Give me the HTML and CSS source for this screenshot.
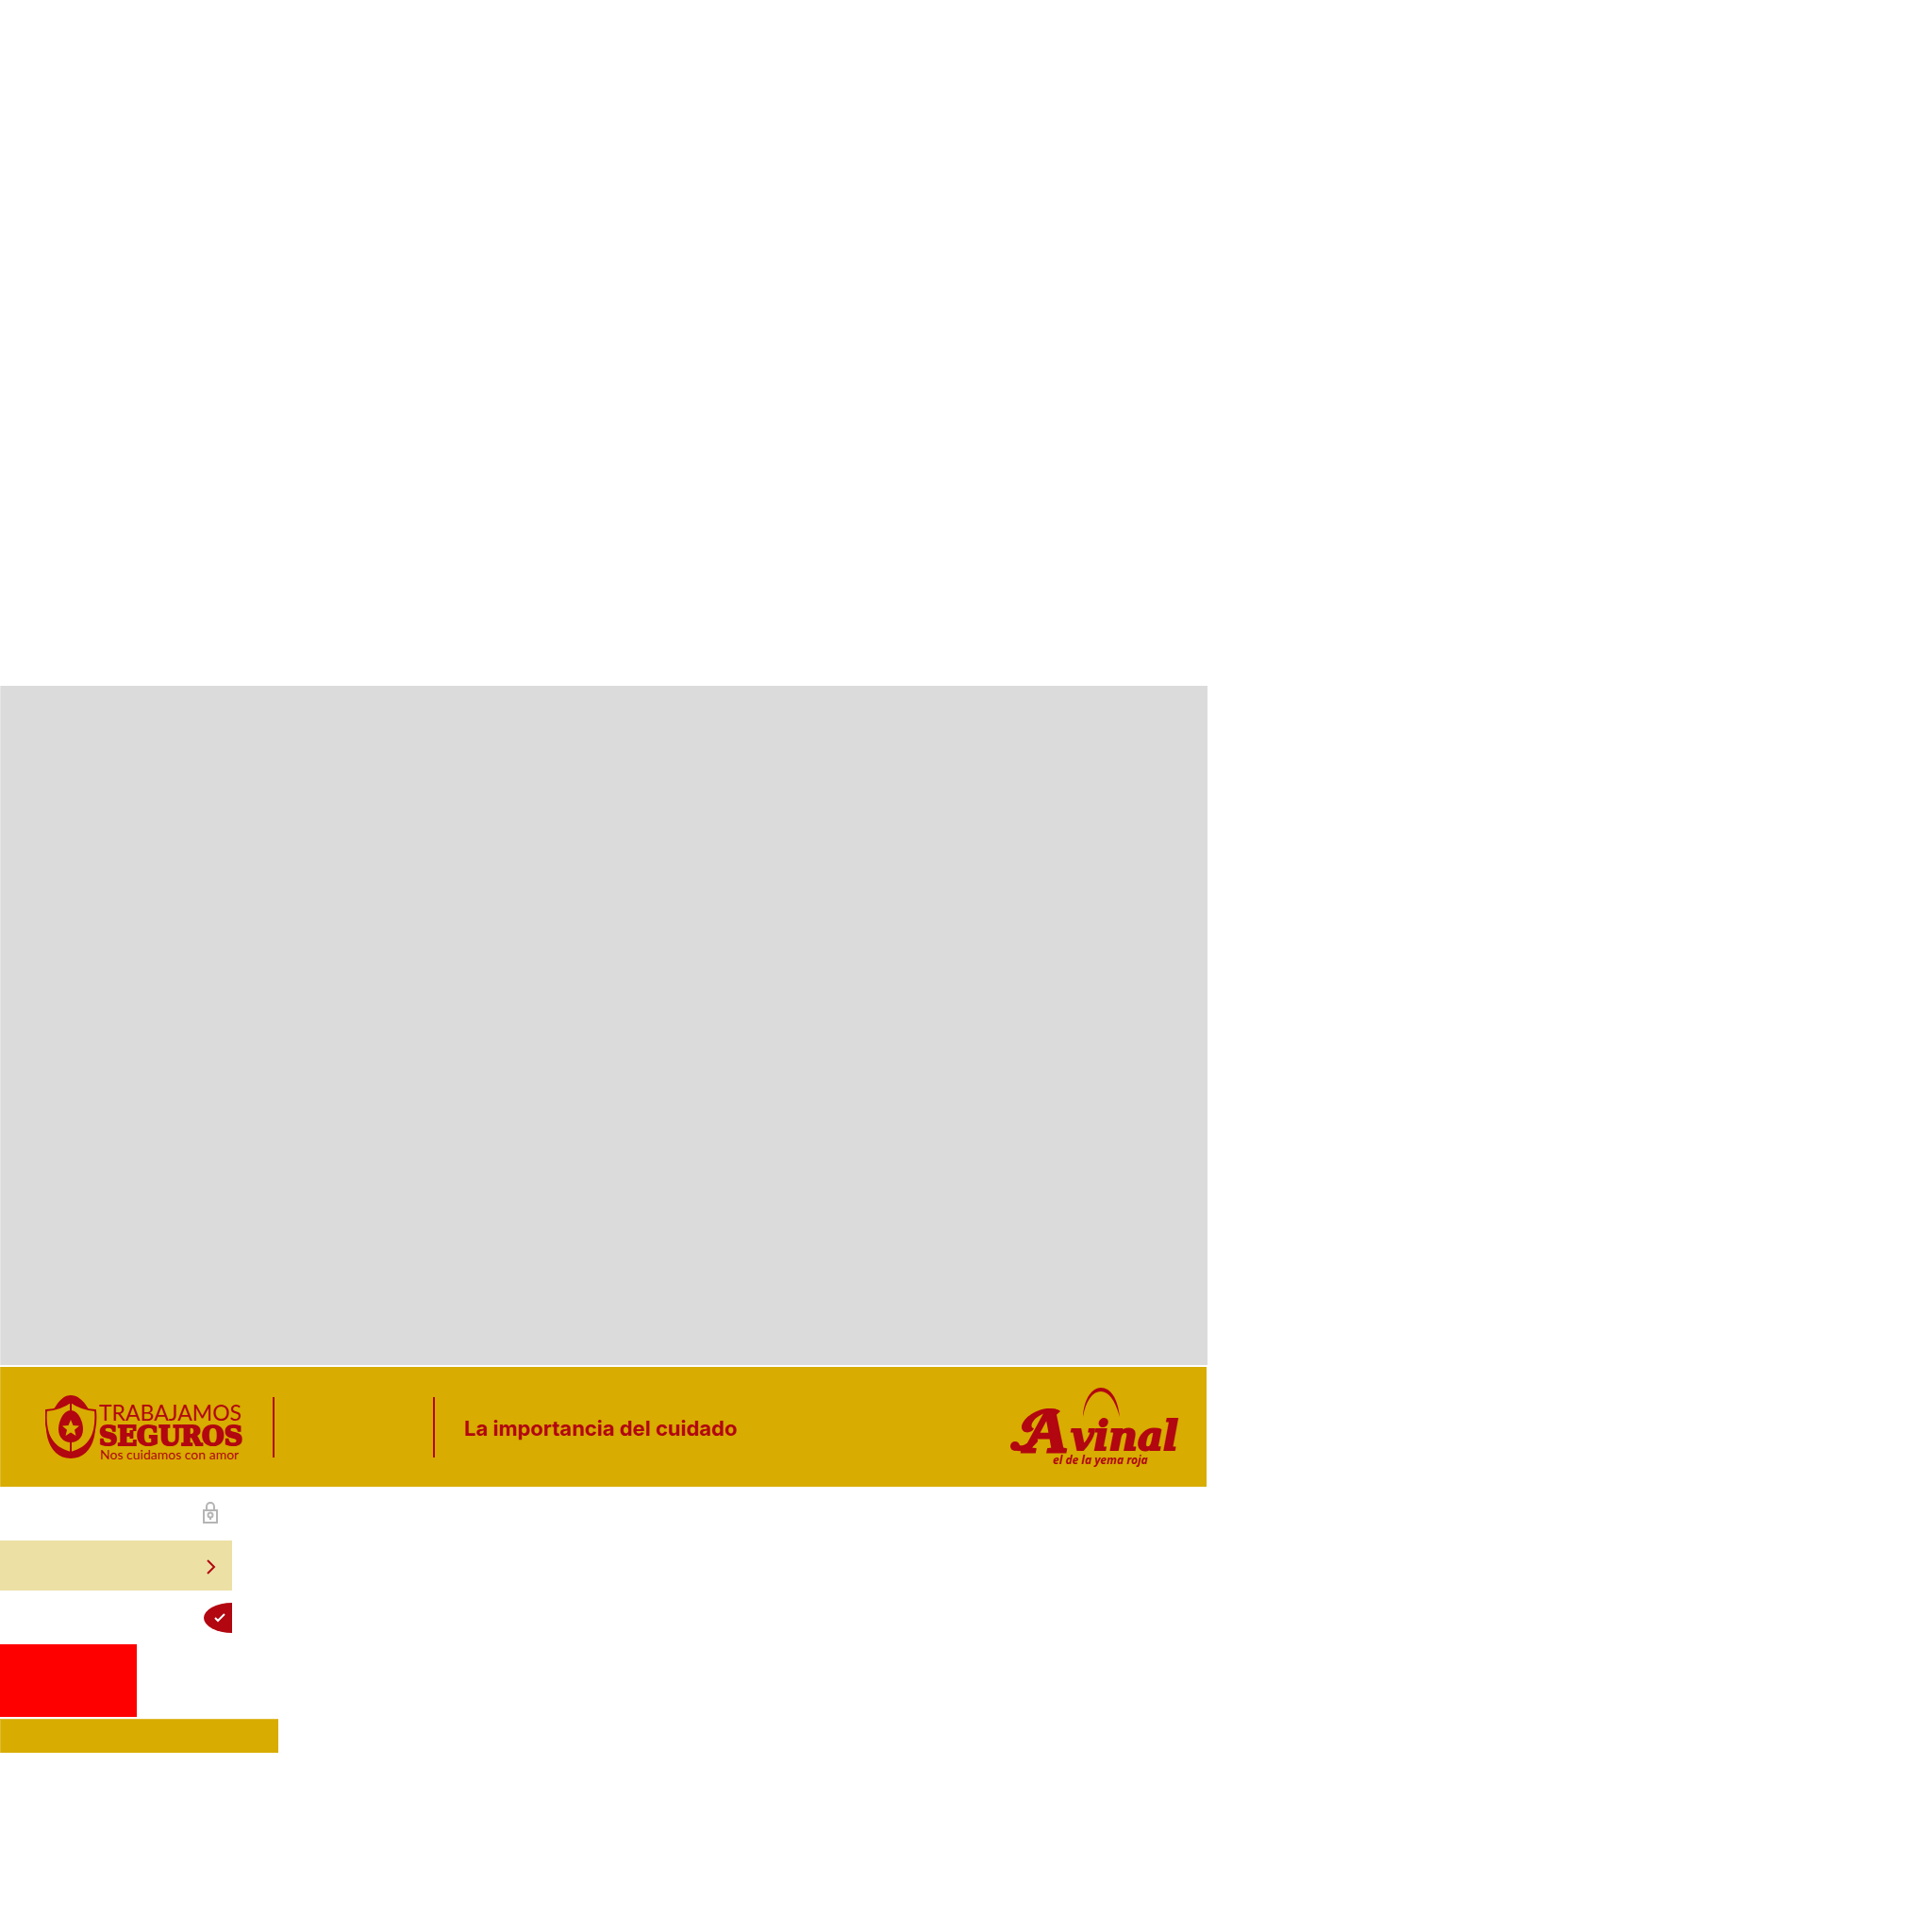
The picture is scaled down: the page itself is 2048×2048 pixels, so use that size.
FILE: index.html
```html
<!DOCTYPE html>
<html lang="es">
<head>
<meta charset="utf-8">
<meta name="viewport" content="width=device-width, initial-scale=1">
<title>La importancia del cuidado</title>
<link rel="stylesheet" href="styles.css">
</head>
<body>
<main class="course">
  <section class="stage" aria-label="Contenido"></section>

  <header class="banner">
    <svg class="brand" width="212" height="74" viewBox="0 0 212 74" role="img" aria-label="Trabajamos Seguros">
      <path class="ink" d="M9 18C15 7 21 3 27 3S40 7 46 18Q36 16 27 10Q19 16 9 18Z"/>
      <path class="line" d="M27 10Q16 18 1 19C-1 40 4 59 27 68C50 59 55 40 53 19Q38 18 27 10Z"/>
      <path class="ink" d="M1 36C1 56 11 70 27 70S53 56 53 36C48 52 41 59 27 63C13 59 6 52 1 36Z"/>
      <path class="stem" d="M27 10V67"/>
      <path class="ink" d="M27 19C35 19 40 31 40 39C40 48 34 53 27 53S14 48 14 39C14 31 19 19 27 19Z"/>
      <path class="star" d="M27 29L29.500 35L36 35.500L31 39.700L32.500 46L27 42.600L21.500 46L23 39.700L18 35.500L24.500 35Z"/>
      <text class="brand-top" x="57" y="30">TRABAJAMOS</text>
      <text class="brand-name" x="57" y="56">SEGUROS</text>
      <text class="brand-tag" x="58" y="71">Nos cuidamos con amor</text>
    </svg>
    <div class="slot"></div>
    <h1 class="title">La importancia del cuidado</h1>
    <svg class="avinal" width="184" height="86" viewBox="0 0 184 86" role="img" aria-label="Avinal, el de la yema roja">
      <path class="ink" d="M78 32C79 12 88 1 97 1C107 1 115 12 117 32C112 14 105 5 97 5C88 5 81 15 78 32Z"/>
      <path class="ink" d="M54 26C51 23 45 23 41 23C26 24 13 35 13 43C13 50 24 50 26 44C20 43 25 31 41 27C45 26 45 30 43 36Z"/>
      <path class="swash" d="M27 57C21 64 12 68 5 63"/>
      <circle class="ink" cx="6" cy="63" r="5"/>
      <text class="initial" x="17" y="69">A</text>
      <text class="wordmark" x="65" y="67">vinal</text>
      <text class="slogan" x="46" y="82">el de la yema roja</text>
    </svg>
  </header>

  <ul class="states">
    <li class="state locked">
      <svg width="18" height="24" viewBox="0 0 18 24" role="img" aria-label="Bloqueado">
        <path d="M2 9H16V22H2ZM5 9V5C5 -0.500 13 -0.500 13 5V9M9 16V19"/>
        <circle cx="9" cy="14" r="2.500"/>
      </svg>
    </li>
    <li class="state current">
      <svg width="10" height="16" viewBox="0 0 10 16" role="img" aria-label="Actual">
        <path d="M1 1L8 8L1 15"/>
      </svg>
    </li>
    <li class="state done">
      <span class="badge">
        <svg width="14" height="12" viewBox="0 0 14 12" role="img" aria-label="Completado">
          <path d="M2 6L5 9L12 2"/>
        </svg>
      </span>
    </li>
  </ul>

  <div class="alert"></div>
  <div class="foot"></div>
</main>
</body>
</html>
```
FILE: styles.css
```css
body {
  margin: 0;
  background: #fff;
  font-family: Lato, "Open Sans", sans-serif;
}

.course {
  max-width: 1280px;
  padding-top: 727px;
}

.stage {
  aspect-ratio: 16 / 9;
  background: #dbdbdb;
  box-shadow: inset 1px 0 #e5e5e5;
}

.banner {
  display: flex;
  align-items: center;
  box-sizing: border-box;
  min-height: 127px;
  margin: 2px 1px 0 0;
  padding: 0 25px 0 48px;
  background: #d8ac00;
  box-shadow: inset 1px 0 #dfbc36;
  color: #b20610;
}

.brand {
  flex: none;
}

.ink,
.banner text {
  fill: #b20610;
}

.line,
.stem,
.swash {
  fill: none;
  stroke: #b20610;
  stroke-width: 2;
}

.swash {
  stroke-width: 6;
  stroke-linecap: round;
}

.star {
  fill: #d8ac00;
}

.brand-top {
  font-size: 23px;
}

.banner .brand-name {
  font: bold 27px "DejaVu Serif", serif;
  stroke: #b20610;
  stroke-width: 2;
}

.brand-tag {
  font-size: 14px;
}

.slot {
  box-sizing: border-box;
  width: 172px;
  height: 64px;
  margin-left: 29px;
  border: solid #b20610;
  border-width: 0 2px;
}

.title {
  margin: 2px 0 0 31px;
  font: 700 22px/30px Inter, sans-serif;
}

.avinal {
  flex: none;
  margin-left: auto;
}

.initial {
  font: italic bold 68px "Liberation Serif", serif;
  stroke: #b20610;
  stroke-width: 3;
}

.wordmark {
  font: italic bold 42px "DejaVu Serif", serif;
  stroke: #b20610;
  stroke-width: 2;
}

.slogan {
  font: italic bold 12px "Noto Sans", sans-serif;
}

.states {
  width: 246px;
  margin: 0;
  padding: 0;
  list-style: none;
}

.state {
  display: flex;
  align-items: center;
  justify-content: flex-end;
  box-sizing: border-box;
  min-height: 57px;
}

.state path,
.state circle {
  fill: none;
  stroke: #b5b5b5;
  stroke-width: 2;
}

.locked {
  padding: 0 14px 2px 0;
}

.current {
  min-height: 53px;
  padding: 2px 17px 0 0;
  background: #ece0a5;
}

.state.current path {
  stroke: #b20610;
}

.badge {
  display: flex;
  align-items: center;
  justify-content: center;
  box-sizing: border-box;
  width: 30px;
  height: 32px;
  padding-left: 3px;
  border-radius: 30px 0 0 30px / 16px 0 0 16px;
  background: #b20610;
}

.done .badge path {
  stroke: #fff;
}

.alert {
  width: 145px;
  height: 77px;
  background: #f00;
}

.foot {
  width: 295px;
  height: 36px;
  margin-top: 2px;
  background: #d8ac00;
  box-shadow: inset 1px 1px #dfbc36;
}
```
